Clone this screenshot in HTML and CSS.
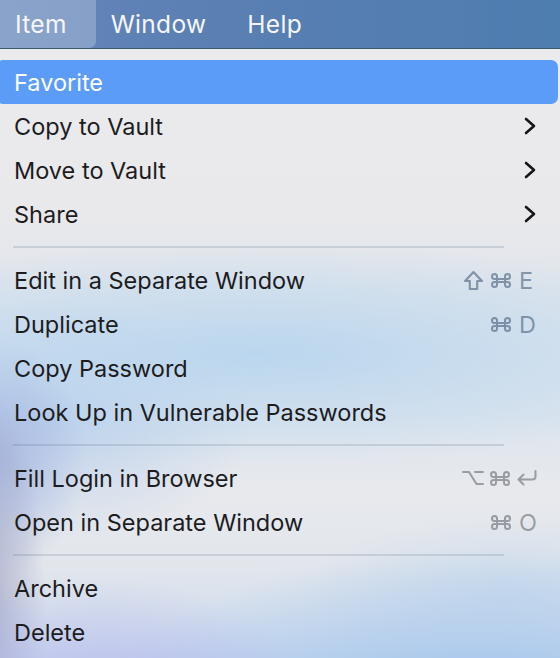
FILE: index.html
```html
<!DOCTYPE html>
<html lang="en">
<head>
    <meta charset="UTF-8">
    <meta name="viewport" content="width=device-width, initial-scale=1.0">
    <title>Item menu</title>
    <link rel="stylesheet" href="styles.css">
</head>
<body>
    <header class="menubar">
        <span class="bar-item active">Item</span>
        <span class="bar-item">Window</span>
        <span class="bar-item">Help</span>
    </header>

    <div class="menu">
        <div class="row selected"><span class="label">Favorite</span></div>
        <div class="row">
            <span class="label">Copy to Vault</span>
            <svg class="chevron" viewBox="0 0 12 18"><path d="M2 2 L10 9 L2 16"/></svg>
        </div>
        <div class="row">
            <span class="label">Move to Vault</span>
            <svg class="chevron" viewBox="0 0 12 18"><path d="M2 2 L10 9 L2 16"/></svg>
        </div>
        <div class="row">
            <span class="label">Share</span>
            <svg class="chevron" viewBox="0 0 12 18"><path d="M2 2 L10 9 L2 16"/></svg>
        </div>

        <div class="separator"></div>

        <div class="row">
            <span class="label">Edit in a Separate Window</span>
            <span class="shortcut blue">
                <svg class="shift" viewBox="0 0 18 18"><path d="M9 1 L17 9.5 L12.5 9.5 L12.5 17 L5.5 17 L5.5 9.5 L1 9.5 Z"/></svg>
                <svg class="cmd" viewBox="0 0 20 15"><path d="M6 6 V3.5 A2.5 2.5 0 1 0 3.5 6 H16.5 A2.5 2.5 0 1 0 14 3.5 V11.5 A2.5 2.5 0 1 0 16.5 9 H3.5 A2.5 2.5 0 1 0 6 11.5 Z"/></svg>
                <span class="key">E</span>
            </span>
        </div>
        <div class="row">
            <span class="label">Duplicate</span>
            <span class="shortcut blue">
                <svg class="cmd" viewBox="0 0 20 15"><path d="M6 6 V3.5 A2.5 2.5 0 1 0 3.5 6 H16.5 A2.5 2.5 0 1 0 14 3.5 V11.5 A2.5 2.5 0 1 0 16.5 9 H3.5 A2.5 2.5 0 1 0 6 11.5 Z"/></svg>
                <span class="key">D</span>
            </span>
        </div>
        <div class="row"><span class="label">Copy Password</span></div>
        <div class="row"><span class="label">Look Up in Vulnerable Passwords</span></div>

        <div class="separator"></div>

        <div class="row">
            <span class="label">Fill Login in Browser</span>
            <span class="shortcut">
                <svg class="option" viewBox="0 0 22 16"><path d="M1 2 L7 2 L14.5 14 L21 14 M13 2 L21 2"/></svg>
                <svg class="cmd" viewBox="0 0 20 15"><path d="M6 6 V3.5 A2.5 2.5 0 1 0 3.5 6 H16.5 A2.5 2.5 0 1 0 14 3.5 V11.5 A2.5 2.5 0 1 0 16.5 9 H3.5 A2.5 2.5 0 1 0 6 11.5 Z"/></svg>
                <svg class="ret" viewBox="0 0 22 18"><path d="M19.5 2 V7.5 Q19.5 10.5 16.5 10.5 H2.5 M7.5 5.5 L2.5 10.5 L7.5 15.5"/></svg>
            </span>
        </div>
        <div class="row">
            <span class="label">Open in Separate Window</span>
            <span class="shortcut">
                <svg class="cmd" viewBox="0 0 20 15"><path d="M6 6 V3.5 A2.5 2.5 0 1 0 3.5 6 H16.5 A2.5 2.5 0 1 0 14 3.5 V11.5 A2.5 2.5 0 1 0 16.5 9 H3.5 A2.5 2.5 0 1 0 6 11.5 Z"/></svg>
                <span class="key">O</span>
            </span>
        </div>

        <div class="separator"></div>

        <div class="row"><span class="label">Archive</span></div>
        <div class="row"><span class="label">Delete</span></div>
    </div>
</body>
</html>
```

FILE: styles.css
```css
body {
    margin: 0;
    padding: 0;
    width: 560px;
    height: 658px;
    overflow: hidden;
    font-family: Inter, "Noto Sans", sans-serif;
    background-color: #e9e9eb;
}
.menubar {
    display: flex;
    align-items: stretch;
    height: 48px;
    background: linear-gradient(90deg, #6686b9 0%, #5a7fb3 40%, #4e7db0 100%);
    border-bottom: 1px solid #3b5a6c;
}
.bar-item {
    display: flex;
    align-items: center;
    color: #f4f6fa;
    font-size: 24.5px;
    letter-spacing: 0.3px;
}
.bar-item.active {
    padding: 0 29px 0 15px;
    background-color: rgba(255, 255, 255, 0.24);
    border-bottom-right-radius: 7px;
}
.bar-item:nth-child(2) {
    padding: 0 41px 0 15px;
}
.menu {
    height: 609px;
    margin-left: -4px;
    padding: 11px 2px 0 0;
    box-sizing: border-box;
    background:
        radial-gradient(ellipse 230px 170px at 110px 700px, rgba(180, 176, 238, 0.95), rgba(180, 176, 238, 0) 100%),
        radial-gradient(ellipse 400px 190px at 480px 690px, rgba(150, 190, 236, 0.95), rgba(150, 190, 236, 0) 100%),
        radial-gradient(ellipse 60px 220px at -10px 560px, rgba(160, 164, 196, 0.8), rgba(160, 164, 196, 0) 100%),
        radial-gradient(ellipse 90px 120px at 0px 410px, rgba(160, 176, 222, 0.8), rgba(160, 176, 222, 0) 100%),
        radial-gradient(ellipse 520px 110px at 260px 305px, rgba(186, 214, 238, 1), rgba(186, 214, 238, 0) 100%),
        radial-gradient(ellipse 200px 120px at 60px 370px, rgba(184, 206, 236, 0.85), rgba(184, 206, 236, 0) 100%),
        radial-gradient(ellipse 220px 70px at 520px 540px, rgba(200, 218, 236, 0.8), rgba(200, 218, 236, 0) 100%),
        linear-gradient(180deg, #ebebed 0%, #e9e9ec 28%, #dfe5ec 40%, #dde5ee 60%, #e7e9ed 72%, #e2e6ec 85%, #cadaee 100%);
}
.row {
    display: flex;
    align-items: center;
    justify-content: space-between;
    height: 44px;
    padding: 0 22px 0 18px;
    color: #1c1c1e;
    font-size: 23.5px;
}
.row.selected {
    background-color: #5c9cf9;
    color: #ffffff;
    border-radius: 7px;
}
.separator {
    height: 2px;
    margin: 10px 54px 10px 17px;
    background-color: rgba(80, 100, 120, 0.18);
}
.chevron {
    width: 12px;
    height: 18px;
    fill: none;
    stroke: #161618;
    stroke-width: 2.6;
    stroke-linecap: round;
    stroke-linejoin: round;
}
.shortcut {
    display: flex;
    align-items: center;
    color: rgba(70, 74, 80, 0.48);
}
.shortcut.blue {
    color: rgba(55, 80, 110, 0.55);
}
.shortcut svg {
    fill: none;
    stroke: currentColor;
    stroke-width: 2;
    stroke-linejoin: round;
    stroke-linecap: round;
}
.shift {
    width: 19px;
    height: 19px;
    margin-right: 8px;
}
.option {
    width: 22px;
    height: 16px;
    margin-right: 6px;
}
.cmd {
    width: 20px;
    height: 15px;
}
.key {
    width: 17px;
    margin-left: 8px;
}
.ret {
    width: 22px;
    height: 18px;
    margin-left: 6px;
    margin-right: -2px;
}
```
